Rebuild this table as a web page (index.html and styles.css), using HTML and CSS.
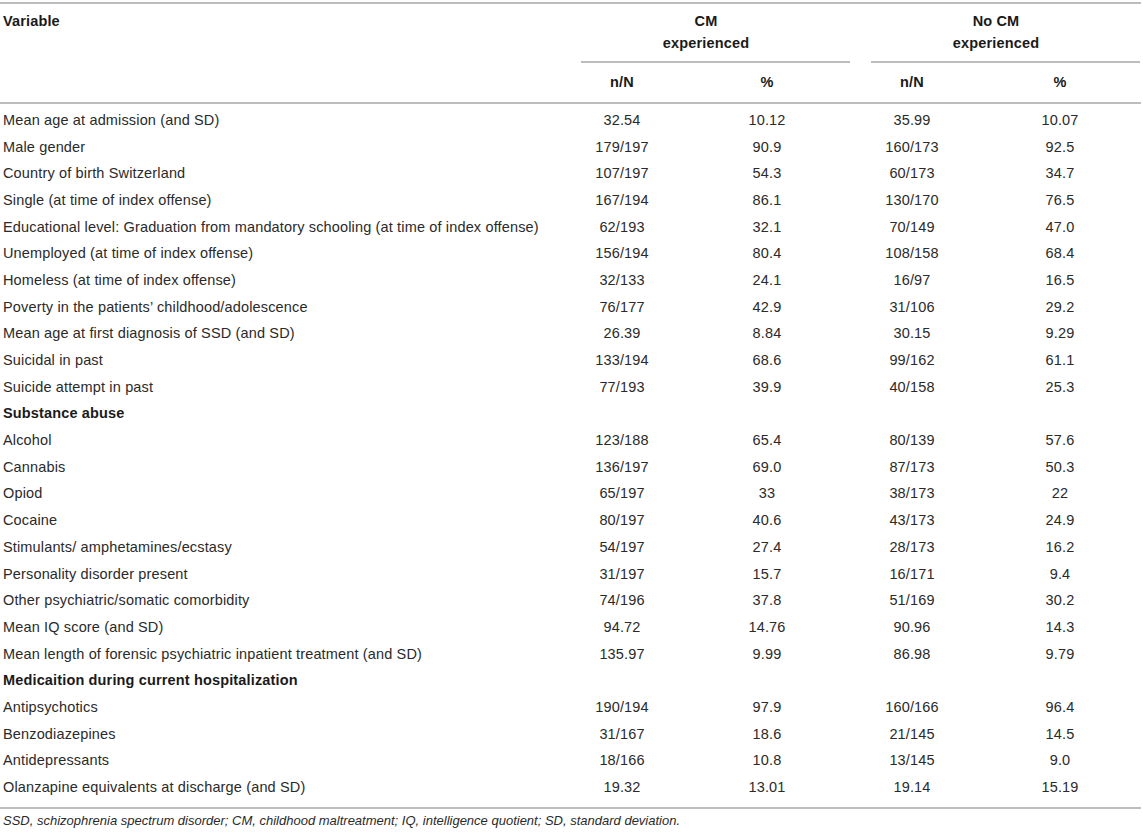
FILE: index.html
```html
<!DOCTYPE html>
<html lang="en">
<head>
<meta charset="utf-8">
<title>Table</title>
<link rel="stylesheet" href="styles.css">
</head>
<body>
<div class="table">
  <div class="thead">
    <div class="th var">Variable</div>
    <div class="th group g1"><span class="gtext">CM<br>experienced</span><span class="gline"></span></div>
    <div class="th group g2"><span class="gtext">No CM<br>experienced</span><span class="gline"></span></div>
    <div class="th sub c2">n/N</div>
    <div class="th sub c3">%</div>
    <div class="th sub c4">n/N</div>
    <div class="th sub c5">%</div>
  </div>
  <div class="tbody">
    <div class="row"><span class="lbl">Mean age at admission (and SD)</span><span>32.54</span><span>10.12</span><span>35.99</span><span class="last">10.07</span></div>
    <div class="row"><span class="lbl">Male gender</span><span>179/197</span><span>90.9</span><span>160/173</span><span class="last">92.5</span></div>
    <div class="row"><span class="lbl">Country of birth Switzerland</span><span>107/197</span><span>54.3</span><span>60/173</span><span class="last">34.7</span></div>
    <div class="row"><span class="lbl">Single (at time of index offense)</span><span>167/194</span><span>86.1</span><span>130/170</span><span class="last">76.5</span></div>
    <div class="row"><span class="lbl">Educational level: Graduation from mandatory schooling (at time of index offense)</span><span>62/193</span><span>32.1</span><span>70/149</span><span class="last">47.0</span></div>
    <div class="row"><span class="lbl">Unemployed (at time of index offense)</span><span>156/194</span><span>80.4</span><span>108/158</span><span class="last">68.4</span></div>
    <div class="row"><span class="lbl">Homeless (at time of index offense)</span><span>32/133</span><span>24.1</span><span>16/97</span><span class="last">16.5</span></div>
    <div class="row"><span class="lbl">Poverty in the patients’ childhood/adolescence</span><span>76/177</span><span>42.9</span><span>31/106</span><span class="last">29.2</span></div>
    <div class="row"><span class="lbl">Mean age at first diagnosis of SSD (and SD)</span><span>26.39</span><span>8.84</span><span>30.15</span><span class="last">9.29</span></div>
    <div class="row"><span class="lbl">Suicidal in past</span><span>133/194</span><span>68.6</span><span>99/162</span><span class="last">61.1</span></div>
    <div class="row"><span class="lbl">Suicide attempt in past</span><span>77/193</span><span>39.9</span><span>40/158</span><span class="last">25.3</span></div>
    <div class="row section"><span class="lbl">Substance abuse</span></div>
    <div class="row"><span class="lbl">Alcohol</span><span>123/188</span><span>65.4</span><span>80/139</span><span class="last">57.6</span></div>
    <div class="row"><span class="lbl">Cannabis</span><span>136/197</span><span>69.0</span><span>87/173</span><span class="last">50.3</span></div>
    <div class="row"><span class="lbl">Opiod</span><span>65/197</span><span>33</span><span>38/173</span><span class="last">22</span></div>
    <div class="row"><span class="lbl">Cocaine</span><span>80/197</span><span>40.6</span><span>43/173</span><span class="last">24.9</span></div>
    <div class="row"><span class="lbl">Stimulants/ amphetamines/ecstasy</span><span>54/197</span><span>27.4</span><span>28/173</span><span class="last">16.2</span></div>
    <div class="row"><span class="lbl">Personality disorder present</span><span>31/197</span><span>15.7</span><span>16/171</span><span class="last">9.4</span></div>
    <div class="row"><span class="lbl">Other psychiatric/somatic comorbidity</span><span>74/196</span><span>37.8</span><span>51/169</span><span class="last">30.2</span></div>
    <div class="row"><span class="lbl">Mean IQ score (and SD)</span><span>94.72</span><span>14.76</span><span>90.96</span><span class="last">14.3</span></div>
    <div class="row"><span class="lbl">Mean length of forensic psychiatric inpatient treatment (and SD)</span><span>135.97</span><span>9.99</span><span>86.98</span><span class="last">9.79</span></div>
    <div class="row section"><span class="lbl">Medicaition during current hospitalization</span></div>
    <div class="row"><span class="lbl">Antipsychotics</span><span>190/194</span><span>97.9</span><span>160/166</span><span class="last">96.4</span></div>
    <div class="row"><span class="lbl">Benzodiazepines</span><span>31/167</span><span>18.6</span><span>21/145</span><span class="last">14.5</span></div>
    <div class="row"><span class="lbl">Antidepressants</span><span>18/166</span><span>10.8</span><span>13/145</span><span class="last">9.0</span></div>
    <div class="row"><span class="lbl">Olanzapine equivalents at discharge (and SD)</span><span>19.32</span><span>13.01</span><span>19.14</span><span class="last">15.19</span></div>
  </div>
</div>
<p class="foot">SSD, schizophrenia spectrum disorder; CM, childhood maltreatment; IQ, intelligence quotient; SD, standard deviation.</p>
</body>
</html>
```

FILE: styles.css
```css
html, body {
  margin: 0;
  padding: 0;
  background: #ffffff;
}

body {
  font-family: "Liberation Sans", Arial, Helvetica, sans-serif;
  font-size: 14.5px;
  letter-spacing: 0.15px;
  color: #2a2a2a;
  padding-top: 2px;
}

.table {
  width: 1141px;
  border-top: 2px solid #bdbdbd;
  border-bottom: 2px solid #bdbdbd;
}

.thead {
  display: grid;
  grid-template-columns: 561px 122px 168px 122px 168px;
  grid-template-rows: 59px 39px;
  border-bottom: 2px solid #bdbdbd;
}

.th {
  font-weight: bold;
  color: #1a1a1a;
  line-height: 22px;
}

.var {
  grid-row: 1 / 3;
  grid-column: 1;
  padding: 6px 0 0 3px;
}

.group {
  grid-row: 1;
  display: flex;
  flex-direction: column;
  align-items: stretch;
  text-align: center;
  padding-top: 6px;
}

.g1 { grid-column: 2 / 4; }
.g2 { grid-column: 4 / 6; }

.gtext {
  display: block;
  height: 44px;
  margin-bottom: 7px;
}

.gline {
  display: block;
  height: 2px;
  background: #bdbdbd;
  margin: 0 1px 0 20px;
}

.sub {
  grid-row: 2;
  text-align: center;
  padding-top: 8px;
}

.c2 { grid-column: 2; }
.c3 { grid-column: 3; }
.c4 { grid-column: 4; }
.c5 { grid-column: 5; padding-left: 6px; }

.tbody {
  padding: 2.5px 0 7px;
}

.row {
  display: grid;
  grid-template-columns: 561px 122px 168px 122px 168px;
  height: 26.7px;
  align-items: center;
  line-height: 18px;
}

.row span {
  text-align: center;
  white-space: nowrap;
}

.row .last {
  padding-left: 6px;
}

.row .lbl {
  text-align: left;
  padding-left: 3px;
}

.section .lbl {
  font-weight: bold;
  color: #1a1a1a;
}

.foot {
  margin: 3px 0 0 3px;
  font-size: 13px;
  letter-spacing: 0;
  line-height: 18px;
  font-style: italic;
  color: #2a2a2a;
}
```
